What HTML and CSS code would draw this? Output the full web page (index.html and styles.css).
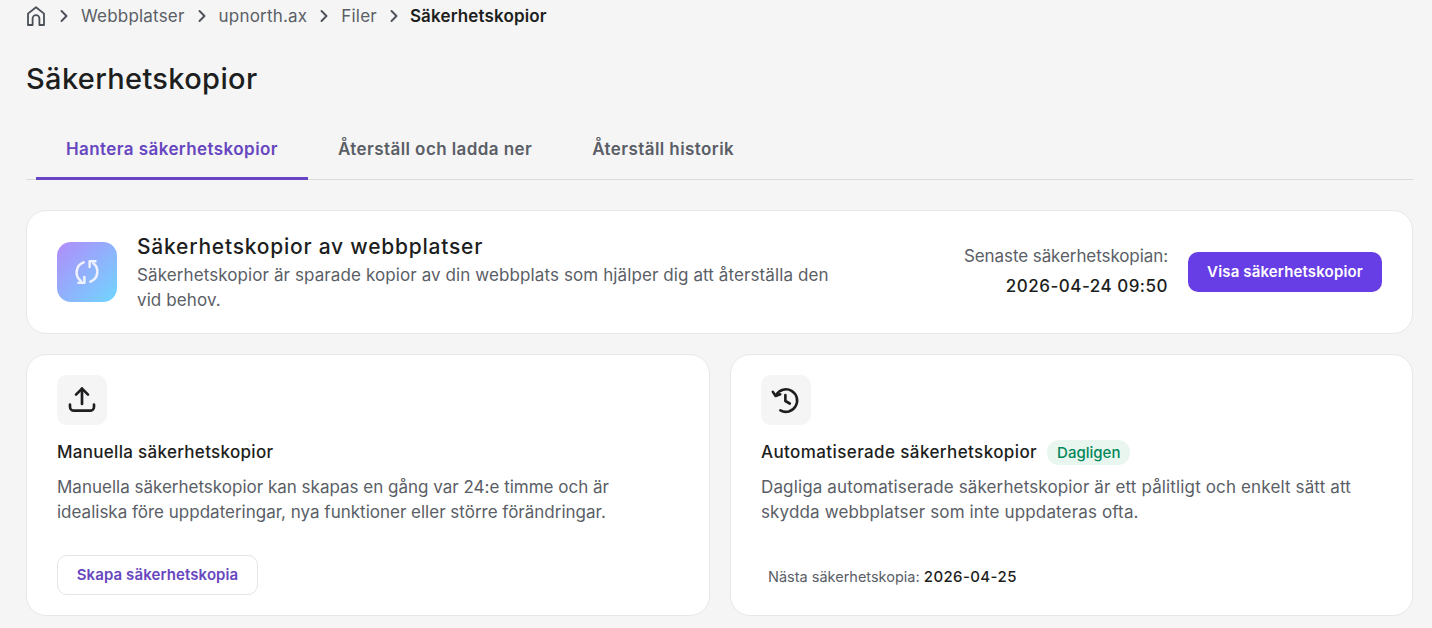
FILE: index.html
```html
<!DOCTYPE html>
<html lang="sv">
<head>
<meta charset="utf-8">
<title>Säkerhetskopior</title>
<link rel="stylesheet" href="styles.css">
</head>
<body>
<nav class="crumbs">
  <svg class="home" width="24" height="24" viewBox="0 0 24 24" fill="none" stroke="#4b4f57" stroke-width="1.8" stroke-linejoin="round" stroke-linecap="round"><path d="M4 21V9.600L12 3.200l8 6.400V21h-4.600v-6.400a3.400 3.400 0 0 0-6.800 0V21z"/></svg>
  <svg class="chev" width="24" height="24" viewBox="0 0 24 24" fill="none" stroke="#4b4f57" stroke-width="1.9" stroke-linecap="round" stroke-linejoin="round"><path d="M9.500 7l5 5-5 5"/></svg>
  <span class="crumb">Webbplatser</span>
  <svg class="chev" width="24" height="24" viewBox="0 0 24 24" fill="none" stroke="#4b4f57" stroke-width="1.9" stroke-linecap="round" stroke-linejoin="round"><path d="M9.500 7l5 5-5 5"/></svg>
  <span class="crumb">upnorth.ax</span>
  <svg class="chev" width="24" height="24" viewBox="0 0 24 24" fill="none" stroke="#4b4f57" stroke-width="1.9" stroke-linecap="round" stroke-linejoin="round"><path d="M9.500 7l5 5-5 5"/></svg>
  <span class="crumb">Filer</span>
  <svg class="chev" width="24" height="24" viewBox="0 0 24 24" fill="none" stroke="#4b4f57" stroke-width="1.9" stroke-linecap="round" stroke-linejoin="round"><path d="M9.500 7l5 5-5 5"/></svg>
  <span class="crumb current">Säkerhetskopior</span>
</nav>
<h1 class="title">Säkerhetskopior</h1>
<div class="tabs">
  <div class="tab active">Hantera säkerhetskopior</div>
  <div class="tab">Återställ och ladda ner</div>
  <div class="tab">Återställ historik</div>
</div>
<section class="card hero">
  <div class="hero-icon">
    <svg width="30" height="30" viewBox="0 0 24 24" fill="none" stroke="#f0f2ff" stroke-width="2" stroke-linecap="round" stroke-linejoin="round"><path d="M9.300 4.300A8.500 8.500 0 0 0 7 19"/><path d="M5.200 20.600h4.700V16"/><path d="M14.700 19.700A8.500 8.500 0 0 0 17 5"/><path d="M18.800 3.400h-4.700V8"/></svg>
  </div>
  <div class="hero-text">
    <h2 class="hero-title">Säkerhetskopior av webbplatser</h2>
    <p class="hero-desc">Säkerhetskopior är sparade kopior av din webbplats som hjälper dig att återställa den vid behov.</p>
  </div>
  <div class="hero-last">
    <div class="last-label">Senaste säkerhetskopian:</div>
    <div class="last-value">2026-04-24 09:50</div>
  </div>
  <button class="btn-primary">Visa säkerhetskopior</button>
</section>
<div class="grid">
  <section class="card panel">
    <div class="tile">
      <svg width="32" height="32" viewBox="0 0 24 24" fill="none" stroke="#1d1e20" stroke-width="2" stroke-linecap="round" stroke-linejoin="round"><path d="M12 15V3.500"/><path d="M7.500 8L12 3.500 16.500 8"/><path d="M3 15.500v1.500a3 3 0 0 0 3 3h12a3 3 0 0 0 3-3v-1.500"/></svg>
    </div>
    <h3 class="panel-title">Manuella säkerhetskopior</h3>
    <p class="panel-desc tight">Manuella säkerhetskopior kan skapas en gång var 24:e timme och är idealiska före uppdateringar, nya funktioner eller större förändringar.</p>
    <div class="panel-foot"><button class="btn-outline">Skapa säkerhetskopia</button></div>
  </section>
  <section class="card panel">
    <div class="tile">
      <svg width="30" height="30" viewBox="1 0 24 24" fill="none" stroke="#1d1e20" stroke-width="2.100" stroke-linecap="round" stroke-linejoin="round"><path d="M5.200 7.800A9 9 0 1 1 8.500 20.300"/><path d="M2.500 5.500l2.200 3.300 3.700-1.400"/><path d="M12.500 8v4.800l3.500 2"/></svg>
    </div>
    <h3 class="panel-title wide">Automatiserade säkerhetskopior <span class="badge">Dagligen</span></h3>
    <p class="panel-desc">Dagliga automatiserade säkerhetskopior är ett pålitligt och enkelt sätt att skydda webbplatser som inte uppdateras ofta.</p>
    <div class="panel-foot next"><span class="next-label">Nästa säkerhetskopia:</span> <span class="next-value">2026-04-25</span></div>
  </section>
</div>
</body>
</html>
```
FILE: styles.css
```css
* { box-sizing: border-box; }
html, body { margin: 0; height: 628px; overflow: hidden; }
body {
  background: #f5f5f5;
  font-family: "Inter", "Liberation Sans", sans-serif;
  color: #1d1e20;
  padding: 0 19px 0 26px;
}
.crumbs { display: flex; align-items: center; height: 32px; font-size: 17px; letter-spacing: 0.2px; }
.home { margin-left: -2px; }
.chev { margin: 0 5px 0 4px; }
.crumb { color: #5a5e66; }
.crumb + .chev { margin-left: 5px; }
.current { color: #1d1e20; font-weight: 600; letter-spacing: 0.15px; margin-left: -1px; }
.title { margin: 29px 0 0; font-size: 29px; line-height: 36px; font-weight: 500; letter-spacing: 0.35px; }
.tabs { display: flex; margin-top: 28px; padding-left: 10px; height: 55px; border-bottom: 1px solid #dadce0; }
.tab { padding: 0 30px; height: 55px; line-height: 48px; font-size: 17px; font-weight: 600; color: #5a5e66; letter-spacing: 0.42px; }
.tab.active { color: #6746c0; border-bottom: 3px solid #6745c4; }
.card { background: #fff; border: 1px solid #e6e7e9; border-radius: 20px; }
.hero { display: flex; align-items: center; height: 124px; margin-top: 30px; padding: 0 30px; }
.hero-icon {
  width: 60px; height: 60px; border-radius: 14px; flex: none;
  display: flex; align-items: center; justify-content: center;
  background: linear-gradient(135deg, #b18cfb, #6fd6fe);
}
.hero-text { margin-left: 20px; width: 700px; padding-top: 2px; }
.hero-title { margin: 0; font-size: 21px; line-height: 28px; font-weight: 500; letter-spacing: 0.77px; }
.hero-desc { margin: 2px 0 0; font-size: 17px; line-height: 25px; color: #5a5e66; letter-spacing: 0.1px; }
.hero-last { margin-left: auto; text-align: right; font-size: 17px; line-height: 24px; padding-bottom: 2px; }
.last-label { color: #5a5e66; letter-spacing: -0.08px; }
.last-value { margin-top: 6px; font-weight: 500; letter-spacing: 0.5px; }
.btn-primary {
  margin-left: 20px; width: 194px; height: 40px; border: 0; border-radius: 10px; padding: 0 0 2px;
  background: #673de6; color: #fff; font: 600 15px "Inter", sans-serif; letter-spacing: 0.15px;
}
.grid { display: grid; grid-template-columns: 684px 683px; gap: 20px; margin-top: 20px; }
.panel { height: 262px; padding: 20px 30px; display: flex; flex-direction: column; }
.tile {
  width: 50px; height: 50px; border-radius: 10px; background: #f5f5f6;
  display: flex; align-items: center; justify-content: center;
}
.panel-title { margin: 14px 0 0; font-size: 17px; line-height: 26px; font-weight: 500; letter-spacing: 0.3px; display: flex; align-items: center; }
.panel-title.wide { letter-spacing: 0.4px; }
.badge {
  margin-left: 10px; height: 25px; padding: 0 10px; border-radius: 12px;
  background: #e9f6ef; color: #00875a; font-size: 15px; line-height: 25px; font-weight: 500; letter-spacing: 0;
}
.panel-desc { margin: 10px 0 0; font-size: 17px; line-height: 25px; color: #5a5e66; letter-spacing: 0.14px; }
.panel-desc.tight { letter-spacing: 0; max-width: 600px; }
.panel-foot { margin-top: auto; }
.btn-outline {
  width: 201px; height: 40px; border: 1px solid #e3e4e7; border-radius: 10px; background: #fff; padding: 0 0 2px;
  color: #6746c0; font: 600 15px "Inter", sans-serif; letter-spacing: 0.1px;
}
.next { padding: 0 0 7px 7px; font-size: 14.500px; line-height: 22px; }
.next-label { color: #5a5e66; }
.next-value { font-weight: 500; font-size: 15px; letter-spacing: 0.4px; }
```
